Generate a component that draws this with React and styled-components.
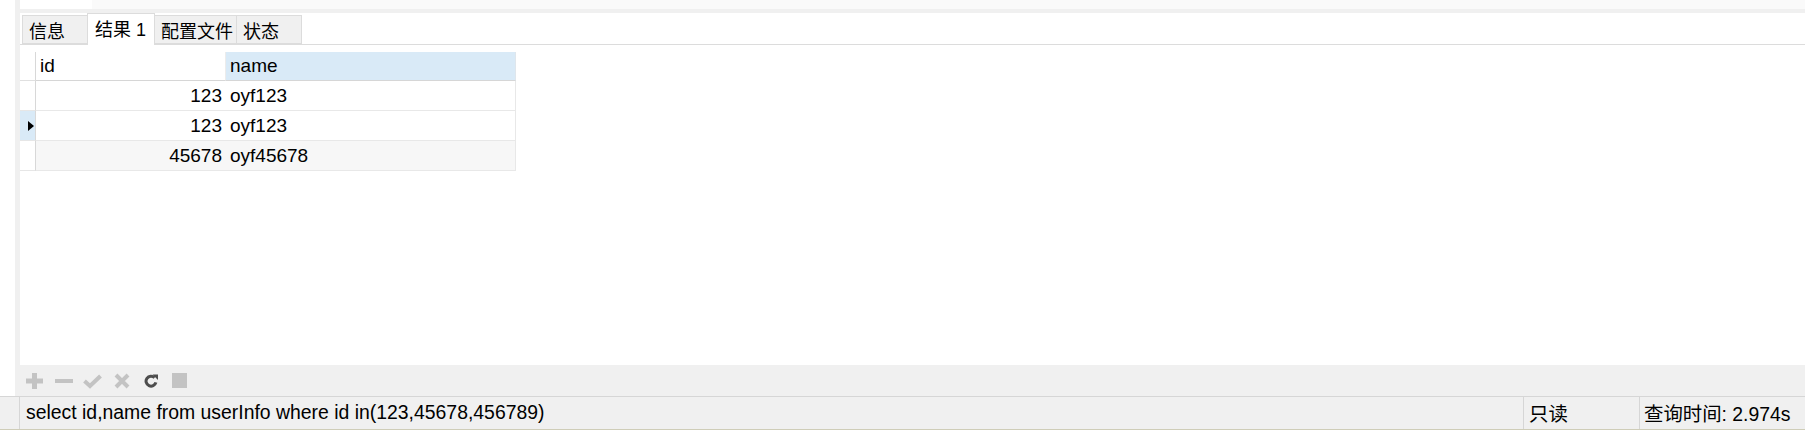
import React from "react";
import styled, { createGlobalStyle } from "styled-components";

const GlobalStyle = createGlobalStyle`
  html, body {
    margin: 0;
    padding: 0;
    background: #fff;
  }
  body {
    font-family: "Liberation Sans", "Noto Sans CJK SC", sans-serif;
    font-size: 19px;
    color: #000;
  }
`;

const Page = styled.div`
  width: 1805px;
  height: 430px;
  display: flex;
  flex-direction: column;
  overflow: hidden;
`;
const Main = styled.div`
  display: flex;
  height: 396px;
`;
const Gutter = styled.div`
  width: 15px;
  background: #fff;
`;
const Divider = styled.div`
  width: 5px;
  background: #f0f0f0;
`;
const Content = styled.div`
  flex: 1;
  display: flex;
  flex-direction: column;
`;
const TopStrip = styled.div`
  height: 9px;
  display: flex;
  background: #fafafa;
`;
const TopCell = styled.div`
  width: 72px;
  background: #fff;
`;
const Band = styled.div`
  height: 4px;
  background: #f0f0f0;
`;
const TabBar = styled.div`
  height: 31px;
  display: flex;
  align-items: flex-end;
  padding-left: 2px;
  border-bottom: 1px solid #dcdcdc;
  background: #fff;
`;
const Tab = styled.div`
  box-sizing: border-box;
  width: ${(p) => p.$w}px;
  height: ${(p) => (p.$active ? 32 : 29)}px;
  margin-bottom: ${(p) => (p.$active ? -1 : 0)}px;
  padding-left: ${(p) => (p.$active ? 7 : 6)}px;
  padding-bottom: ${(p) => (p.$active ? 4 : 0)}px;
  display: flex;
  align-items: center;
  font-size: 18px;
  background: ${(p) => (p.$active ? "#fff" : "#f0f0f0")};
  border: 1px solid #dcdcdc;
  border-bottom: ${(p) => (p.$active ? "none" : "1px solid #dcdcdc")};
  border-left-width: ${(p) => (p.$first || p.$active ? 1 : 0)}px;
  border-right-width: ${(p) => (p.$beforeActive ? 0 : 1)}px;
  white-space: nowrap;
`;
const GridArea = styled.div`
  flex: 1;
  padding-top: 7px;
  background: #fff;
`;
const Grid = styled.div`
  display: grid;
  grid-template-columns: 16px 190px 290px;
  width: 496px;
`;
const Corner = styled.div`
  box-sizing: border-box;
  height: 29px;
  border-right: 1px solid #d8d8d8;
  border-bottom: 1px solid #e0e0e0;
`;
const HeadCell = styled.div`
  box-sizing: border-box;
  height: 29px;
  padding-left: 4px;
  display: flex;
  align-items: center;
  background: ${(p) => (p.$active ? "#d9eaf7" : "#fff")};
  border-bottom: 1px solid #d6d6d6;
  border-right: 1px solid ${(p) => (p.$active ? "#dfe6ec" : "#ececec")};
`;
const RowHead = styled.div`
  box-sizing: border-box;
  height: 30px;
  display: flex;
  align-items: center;
  padding-left: 8px;
  background: ${(p) => (p.$selected ? "#d9eaf7" : "#fff")};
  border-right: 1px solid #d8d8d8;
  border-bottom: 1px solid #e6e6e6;
`;
const Cell = styled.div`
  box-sizing: border-box;
  height: 30px;
  display: flex;
  align-items: center;
  justify-content: ${(p) => (p.$right ? "flex-end" : "flex-start")};
  padding: ${(p) => (p.$right ? "0 4px 0 0" : "0 0 0 4px")};
  background: ${(p) => (p.$alt ? "#f7f7f7" : "#fff")};
  border-bottom: 1px solid #e8e8e8;
  border-right: ${(p) => (p.$last ? "1px solid #e8e8e8" : "none")};
`;
const Pointer = styled.div`
  width: 0;
  height: 0;
  border-top: 5px solid transparent;
  border-bottom: 5px solid transparent;
  border-left: 6px solid #000;
`;
const Toolbar = styled.div`
  height: 31px;
  display: flex;
  align-items: center;
  background: #f0f0f0;
`;
const ToolButton = styled.div`
  width: 29px;
  height: 31px;
  display: flex;
  align-items: center;
  justify-content: center;
`;
const StatusBar = styled.div`
  box-sizing: border-box;
  height: 34px;
  display: flex;
  background: #f0f0f0;
  border-top: 1px solid #d6d6d6;
  border-bottom: 1px solid #cfcdb8;
`;
const StatusCell = styled.div`
  box-sizing: border-box;
  display: flex;
  align-items: center;
  padding-bottom: 2px;
  font-size: 19.4px;
  white-space: nowrap;
  ${(p) => (p.$w ? `width: ${p.$w}px;` : "flex: 1;")}
  padding-left: ${(p) => p.$pad || 0}px;
  border-left: ${(p) => (p.$sep ? "1px solid #d6d6d6" : "none")};
  border-right: ${(p) => (p.$end ? "1px solid #d6d6d6" : "none")};
`;

const ICON = "#c3c3c3";

const PlusIcon = () => (
  <svg width="17" height="16" viewBox="0 0 17 16">
    <rect x="0" y="5.5" width="17" height="5" fill={ICON} />
    <rect x="6" y="0" width="5" height="16" fill={ICON} />
  </svg>
);
const MinusIcon = () => (
  <svg width="18" height="16" viewBox="0 0 18 16">
    <rect x="0" y="6" width="18" height="4" fill={ICON} />
  </svg>
);
const CheckIcon = () => (
  <svg width="19" height="16" viewBox="0 0 19 16">
    <polyline
      points="1.5,8 7,13 17.5,3"
      fill="none"
      stroke={ICON}
      strokeWidth="4"
    />
  </svg>
);
const CrossIcon = () => (
  <svg width="16" height="16" viewBox="0 0 16 16">
    <path d="M2 2 L14 14 M14 2 L2 14" stroke={ICON} strokeWidth="4" />
  </svg>
);
const RefreshIcon = () => (
  <svg width="14" height="14" viewBox="0 0 14 14">
    <path
      d="M10.6 3.6 A5 5 0 1 0 11.9 8.4"
      fill="none"
      stroke="#4d4d4d"
      strokeWidth="3"
    />
    <polygon points="8.5,0.5 14,0.5 14,6" fill="#4d4d4d" />
  </svg>
);
const StopIcon = () => (
  <svg width="15" height="15" viewBox="0 0 15 15">
    <rect x="0" y="0" width="15" height="15" fill={ICON} />
  </svg>
);

const tabs = [
  { label: "信息", w: 65 },
  { label: "结果 1", w: 68, active: true },
  { label: "配置文件", w: 82 },
  { label: "状态", w: 65 },
];

const rows = [
  { id: 123, name: "oyf123" },
  { id: 123, name: "oyf123", selected: true },
  { id: 45678, name: "oyf45678", alt: true },
];

const tools = [PlusIcon, MinusIcon, CheckIcon, CrossIcon, RefreshIcon, StopIcon];

const App = () => {
  return (
    <Page>
      <GlobalStyle />
      <Main>
        <Gutter />
        <Divider />
        <Content>
          <TopStrip>
            <TopCell />
          </TopStrip>
          <Band />
          <TabBar>
            {tabs.map((t, i) => (
              <Tab
                key={t.label}
                $w={t.w}
                $active={t.active}
                $first={i === 0}
                $beforeActive={tabs[i + 1]?.active}
              >
                {t.label}
              </Tab>
            ))}
          </TabBar>
          <GridArea>
            <Grid>
              <Corner />
              <HeadCell>id</HeadCell>
              <HeadCell $active>name</HeadCell>
              {rows.map((r, i) => (
                <React.Fragment key={i}>
                  <RowHead $selected={r.selected}>
                    {r.selected && <Pointer />}
                  </RowHead>
                  <Cell $right $alt={r.alt}>
                    {r.id}
                  </Cell>
                  <Cell $alt={r.alt} $last>
                    {r.name}
                  </Cell>
                </React.Fragment>
              ))}
            </Grid>
          </GridArea>
          <Toolbar>
            {tools.map((Icon, i) => (
              <ToolButton key={i}>
                <Icon />
              </ToolButton>
            ))}
          </Toolbar>
        </Content>
      </Main>
      <StatusBar>
        <StatusCell $w={20} $end />
        <StatusCell $pad={6}>
          select id,name from userInfo where id in(123,45678,456789)
        </StatusCell>
        <StatusCell $w={116} $pad={5} $sep>
          只读
        </StatusCell>
        <StatusCell $w={166} $pad={4} $sep>
          查询时间: 2.974s
        </StatusCell>
      </StatusBar>
    </Page>
  );
};

export default App;
